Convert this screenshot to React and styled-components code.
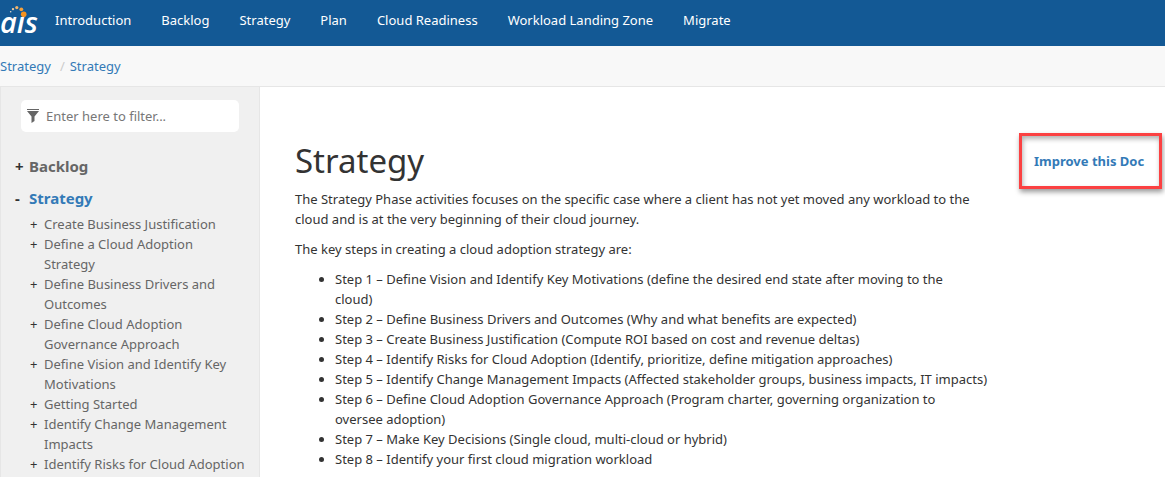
import React from 'react';
import styled, { createGlobalStyle } from 'styled-components';

const Global = createGlobalStyle`
  *, *::before, *::after { box-sizing: border-box; }
  html, body { margin: 0; }
  body {
    background: #fff;
    color: #333;
    font: 13px/20px "Segoe UI", "Noto Sans", "Open Sans", sans-serif;
  }
  #root { min-height: 100vh; display: flex; flex-direction: column; }
  a { color: #337ab7; text-decoration: none; }
`;

const NavBar = styled.nav`
  display: flex;
  height: 46px;
  background: #135995;
`;
const Brand = styled.a`
  display: block;
  width: 40px;
  height: 46px;
`;
const NavList = styled.ul`
  display: flex;
  margin: 0;
  padding: 0;
  list-style: none;
`;
const NavLink = styled.a`
  display: block;
  padding: 10px 15px;
  color: #fff;
`;

const Crumbs = styled.ol`
  display: flex;
  gap: 9px;
  margin: 0;
  padding: 10px 0;
  list-style: none;
  background: #f8f8f8;
  border-bottom: 1px solid #e6e6e6;
`;
const Divider = styled.span`
  color: #ccc;
  padding-right: 5px;
`;

const Body = styled.div`
  display: flex;
  flex: 1;
`;
const Sidebar = styled.aside`
  flex: none;
  width: 260px;
  padding: 13px 0 0;
  background: #f0f0f0;
  border: solid #e6e6e6;
  border-width: 0 1px;
`;
const Filter = styled.label`
  display: flex;
  align-items: center;
  gap: 7px;
  height: 32px;
  margin: 0 20px;
  padding: 0 6px;
  background: #fff;
  border-radius: 5px;
`;
const FilterInput = styled.input`
  flex: 1;
  min-width: 0;
  padding: 0;
  border: 0;
  outline: 0;
  background: none;
  font: inherit;
  color: #555;
  &::placeholder { color: #777; opacity: 1; }
`;
const Tree = styled.ul`
  display: flex;
  flex-direction: column;
  gap: 12px;
  margin: 24px 0 0;
  padding: 0 13px 0 14px;
  list-style: none;
`;
const SubTree = styled.ul`
  margin: 6px 0 0;
  padding: 0 0 0 15px;
  list-style: none;
`;
const Row = styled.div`
  display: flex;
`;
const Toggle = styled.button`
  flex: none;
  align-self: flex-start;
  width: 14px;
  padding: 0;
  border: 0;
  background: none;
  color: #333;
  font: inherit;
  font-size: ${p => (p.$top ? 15 : 13)}px;
  font-weight: ${p => (p.$top ? 700 : 400)};
  text-align: left;
`;
const TopLink = styled.a`
  font-size: 15px;
  font-weight: 700;
  color: ${p => (p.$active ? '#337ab7' : '#666')};
`;
const SubLink = styled.a`
  color: #666;
`;

const Main = styled.main`
  display: flex;
  flex: 1;
  min-width: 0;
  padding: 46px 3px 0 35px;
  gap: 20px;
  align-items: flex-start;
`;
const Article = styled.article`
  flex: 1;
  min-width: 0;
`;
const Title = styled.h1`
  margin: 8px 0;
  font-size: 33px;
  font-weight: 400;
  line-height: 40px;
`;
const Para = styled.p`
  margin: 0 0 10px;
`;
const Steps = styled.ul`
  margin: 0;
  padding: 0 0 0 40px;
  white-space: pre-line;
`;
const Improve = styled.div`
  flex: none;
  width: 143px;
  padding: 15px 12px;
  border: 3px solid #fb4142;
  box-shadow: 1px 3px 5px rgba(0, 0, 0, 0.4), inset 1px 3px 5px rgba(0, 0, 0, 0.3);
  font-weight: 700;
`;

const nav = ['Introduction', 'Backlog', 'Strategy', 'Plan', 'Cloud Readiness', 'Workload Landing Zone', 'Migrate'];
const topics = [
  'Create Business Justification',
  'Define a Cloud Adoption Strategy',
  'Define Business Drivers and Outcomes',
  'Define Cloud Adoption Governance Approach',
  'Define Vision and Identify Key Motivations',
  'Getting Started',
  'Identify Change Management Impacts',
  'Identify Risks for Cloud Adoption',
];
const steps = [
  'Step 1 – Define Vision and Identify Key Motivations (define the desired end state after moving to the\ncloud)',
  'Step 2 – Define Business Drivers and Outcomes (Why and what benefits are expected)',
  'Step 3 – Create Business Justification (Compute ROI based on cost and revenue deltas)',
  'Step 4 – Identify Risks for Cloud Adoption (Identify, prioritize, define mitigation approaches)',
  'Step 5 – Identify Change Management Impacts (Affected stakeholder groups, business impacts, IT impacts)',
  'Step 6 – Define Cloud Adoption Governance Approach (Program charter, governing organization to\noversee adoption)',
  'Step 7 – Make Key Decisions (Single cloud, multi-cloud or hybrid)',
  'Step 8 – Identify your first cloud migration workload',
];

const Logo = () => (
  <svg width="40" height="46" viewBox="0 0 40 46">
    <text x="0" y="33" fill="#fff" fontFamily="Open Sans, sans-serif" fontSize="29" fontWeight="600" fontStyle="italic">ais</text>
    <circle cx="23.7" cy="13" r="3.6" fill="#135995" />
    <circle cx="23.7" cy="14.3" r="2.8" fill="#f7931e" />
    <circle cx="21.3" cy="9.3" r="1.9" fill="#f5a03a" />
    <circle cx="16.8" cy="7.6" r="1.6" fill="#f3b56a" />
    <circle cx="13" cy="9.1" r="1.2" fill="#f0c898" />
    <circle cx="10.7" cy="11.8" r="0.8" fill="#e8dccb" />
  </svg>
);

const Funnel = () => (
  <svg width="12" height="14" viewBox="0 0 12 14" fill="#666">
    <path d="M0 0h12v1H0zM0 2h12L7.5 7.5V12L4.5 14V7.5z" />
  </svg>
);

export default function App() {
  return (
    <>
      <Global />
      <NavBar>
        <Brand href="#" aria-label="ais"><Logo /></Brand>
        <NavList>
          {nav.map(n => <li key={n}><NavLink href="#">{n}</NavLink></li>)}
        </NavList>
      </NavBar>
      <Crumbs>
        <li><a href="#">Strategy</a></li>
        <li><Divider>/</Divider><a href="#">Strategy</a></li>
      </Crumbs>
      <Body>
        <Sidebar>
          <Filter>
            <Funnel />
            <FilterInput type="text" aria-label="Filter" placeholder="Enter here to filter..." />
          </Filter>
          <Tree>
            <li>
              <Row><Toggle $top>+</Toggle><TopLink href="#">Backlog</TopLink></Row>
            </li>
            <li>
              <Row><Toggle $top>-</Toggle><TopLink $active href="#">Strategy</TopLink></Row>
              <SubTree>
                {topics.map(t => (
                  <li key={t}>
                    <Row><Toggle>+</Toggle><SubLink href="#">{t}</SubLink></Row>
                  </li>
                ))}
              </SubTree>
            </li>
          </Tree>
        </Sidebar>
        <Main>
          <Article>
            <Title>Strategy</Title>
            <Para>The Strategy Phase activities focuses on the specific case where a client has not yet moved any workload to the cloud and is at the very beginning of their cloud journey.</Para>
            <Para>The key steps in creating a cloud adoption strategy are:</Para>
            <Steps>
              {steps.map(s => <li key={s}>{s}</li>)}
            </Steps>
          </Article>
          <Improve><a href="#">Improve this Doc</a></Improve>
        </Main>
      </Body>
    </>
  );
}
